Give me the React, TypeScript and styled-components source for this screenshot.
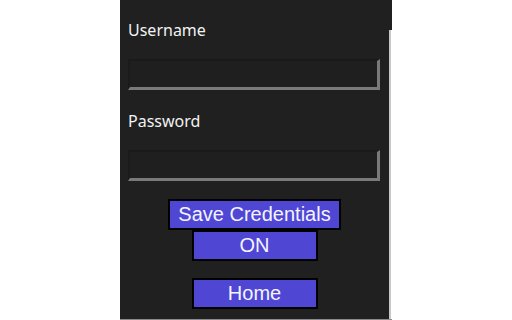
import styled, { createGlobalStyle } from 'styled-components';

const GlobalStyle = createGlobalStyle`
	html, body {
		margin: 0;
		padding: 0;
		background: #ffffff;
	}
	#root {
		display: flex;
		justify-content: center;
	}
`;

const Popup = styled.div`
	display: flex;
	height: 319px;
	border-bottom: 1px solid #8a8a8a;
`;

const Panel = styled.div`
	width: 253px;
	background: #202020;
	padding: 20px 8px 0 8px;
	display: flex;
	flex-direction: column;
`;

const Edge = styled.div`
	width: 3px;
	display: flex;
	flex-direction: column;
`;

const EdgeTop = styled.div`
	height: 30px;
	background: #202020;
`;

const EdgeLine = styled.div`
	flex: 1;
	width: 2px;
	background: #c8c8c8;
`;

const Label = styled.label`
	font-family: 'Noto Sans', 'Open Sans', sans-serif;
	font-size: 16px;
	line-height: 20px;
	color: #f2f2f2;
`;

const Field = styled.input`
	box-sizing: border-box;
	width: 252px;
	height: 31px;
	margin: 19px 0 21px;
	background: #1f1f1f;
	border-style: solid;
	border-width: 2px 3px 3px 2px;
	border-color: #1a1a1a #7a7a7a #7a7a7a #1a1a1a;
	outline: none;
	color: #fff;
`;

const Buttons = styled.div`
	display: flex;
	flex-direction: column;
	align-items: center;
	margin-top: -3px;
`;

const Button = styled.button<{ $wide?: boolean; $gap?: number }>`
	box-sizing: border-box;
	width: ${(p) => (p.$wide ? '173px' : '126px')};
	height: 31px;
	margin-top: ${(p) => p.$gap ?? 0}px;
	padding: 0;
	background: #4f46d4;
	border: 2px solid #000;
	color: #f4f4ff;
	font-family: 'Liberation Sans', Arial, sans-serif;
	font-size: 20px;
	line-height: 25px;
	cursor: pointer;
`;

export default function App() {
	return (
		<>
			<GlobalStyle />
			<Popup>
				<Panel>
					<Label>Username</Label>
					<Field type="text" />
					<Label>Password</Label>
					<Field type="password" />
					<Buttons>
						<Button $wide>Save Credentials</Button>
						<Button>ON</Button>
						<Button $gap={17}>Home</Button>
					</Buttons>
				</Panel>
				<Edge>
					<EdgeTop />
					<EdgeLine />
				</Edge>
			</Popup>
		</>
	);
}
